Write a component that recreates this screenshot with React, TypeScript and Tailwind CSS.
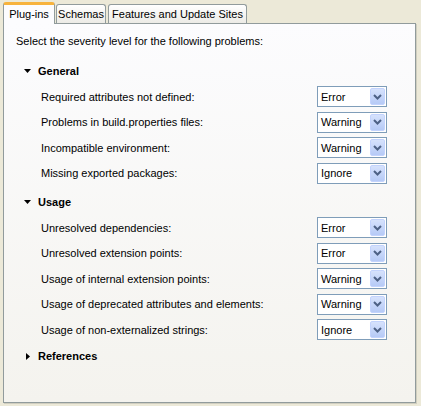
type Row = {
  label: string;
  value: 'Error' | 'Warning' | 'Ignore';
};

type Section = {
  title: string;
  open: boolean;
  rows: Row[];
};

const sections: Section[] = [
  {
    title: 'General',
    open: true,
    rows: [
      { label: 'Required attributes not defined:', value: 'Error' },
      { label: 'Problems in build.properties files:', value: 'Warning' },
      { label: 'Incompatible environment:', value: 'Warning' },
      { label: 'Missing exported packages:', value: 'Ignore' },
    ],
  },
  {
    title: 'Usage',
    open: true,
    rows: [
      { label: 'Unresolved dependencies:', value: 'Error' },
      { label: 'Unresolved extension points:', value: 'Error' },
      { label: 'Usage of internal extension points:', value: 'Warning' },
      { label: 'Usage of deprecated attributes and elements:', value: 'Warning' },
      { label: 'Usage of non-externalized strings:', value: 'Ignore' },
    ],
  },
  { title: 'References', open: false, rows: [] },
];

const tabs = ['Plug-ins', 'Schemas', 'Features and Update Sites'];

const Combo = ({ value }: { value: string }) => (
  <div className="flex items-center w-[70px] h-[21px] border border-[#7F9DB9] bg-white pl-[3px] pr-px">
    <span className="flex-1 text-black">{value}</span>
    <div className="flex items-center justify-center w-[15px] h-[17px] rounded-[2px] bg-gradient-to-b from-[#D6E2FC] to-[#B6CAF6] border border-[#C3D3FD]">
      <svg width="9" height="6" viewBox="0 0 9 6">
        <polyline points="1,1 4.5,4.5 8,1" fill="none" stroke="#4D6185" strokeWidth="2" />
      </svg>
    </div>
  </div>
);

const Triangle = ({ open }: { open: boolean }) =>
  open ? (
    <svg width="7" height="4" viewBox="0 0 7 4" className="mr-[7px]">
      <polygon points="0,0 7,0 3.5,4" fill="#000" />
    </svg>
  ) : (
    <svg width="4" height="7" viewBox="0 0 4 7" className="ml-[2px] mr-[8px]">
      <polygon points="0,0 4,3.5 0,7" fill="#000" />
    </svg>
  );

const App = () => {
  return (
    <div
      className="w-[421px] h-[406px] bg-[#ECE9D8] overflow-hidden text-[11px] text-black"
      style={{ fontFamily: '"Liberation Sans", Arial, sans-serif' }}
    >
      {/* TABS */}
      <div className="flex items-end h-[23px] pl-[3px] gap-[1px]">
        {tabs.map((tab, i) =>
          i === 0 ? (
            <div
              key={tab}
              className="relative z-10 h-[22px] -mb-px w-[52px] justify-center flex items-center bg-[#FCFCFE] border border-b-0 border-[#919B9C] rounded-t-[3px] border-t-[3px] border-t-[#F7B33D]"
            >
              {tab}
            </div>
          ) : (
            <div
              key={tab}
              className={`h-[19px] justify-center flex items-center bg-gradient-to-b from-white to-[#ECEBE6] border border-b-0 border-[#919B9C] rounded-t-[3px] ${
                i === 1 ? 'w-[50px]' : 'w-[139px] ml-px'
              }`}
            >
              {tab}
            </div>
          )
        )}
      </div>

      {/* PANEL */}
      <div className="ml-[3px] w-[413px] h-[380px] border border-[#919B9C] bg-gradient-to-b from-[#FCFCFE] to-[#F4F3EE] shadow-[1px_1px_0_#D0CEBF]">
        <div className="mt-[10px] h-[14px] flex items-center pl-[12px]">
          Select the severity level for the following problems:
        </div>

        <div className="mt-[10px]">
          {sections.map((section, si) => (
            <div key={section.title} className={si === 0 ? '' : si === 1 ? 'mt-[3px]' : 'mt-[1px]'}>
              <div className="h-[26px] flex items-center pl-[20px] font-bold">
                <Triangle open={section.open} />
                {section.title}
              </div>
              {section.rows.map(row => (
                <div key={row.label} className="h-[25.5px] flex items-center pl-[37px] pr-[28px]">
                  <span className="flex-1">{row.label}</span>
                  <Combo value={row.value} />
                </div>
              ))}
            </div>
          ))}
        </div>
      </div>
    </div>
  );
};

export default App;
